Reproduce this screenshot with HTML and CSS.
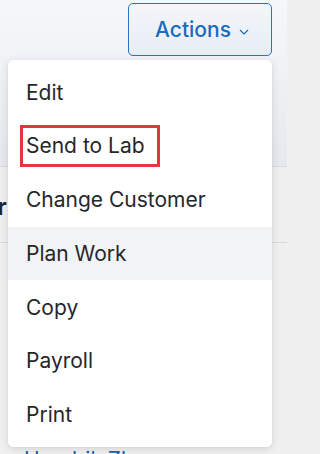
FILE: index.html
```html
<!DOCTYPE html>
<html>
<head>
<meta charset="utf-8">
<link rel="stylesheet" href="styles.css">
</head>
<body>
<div class="page">
  <div class="header">
    <button class="actions">Actions
      <svg class="chev" width="10" height="6" viewBox="0 0 10 6"><path d="M1 1 L5 5 L9 1" fill="none" stroke="#1b6bbf" stroke-width="1.2"/></svg>
    </button>
  </div>
  <div class="row"><span class="title">r</span></div>
  <div class="rest"><span class="link">Hendrik Zhang</span></div>
</div>
<ul class="menu">
  <li class="item">Edit</li>
  <li class="item"><span class="marked">Send to Lab</span></li>
  <li class="item">Change Customer</li>
  <li class="item hover">Plan Work</li>
  <li class="item">Copy</li>
  <li class="item">Payroll</li>
  <li class="item">Print</li>
</ul>
</body>
</html>
```
FILE: styles.css
```css
html, body {
  margin: 0;
  padding: 0;
  width: 287px;
  height: 454px;
  overflow: hidden;
}
body {
  position: relative;
  background: #f0f0f1;
  font-family: Inter, "Noto Sans", sans-serif;
}
.page {
  width: 287px;
  height: 454px;
  overflow: hidden;
  display: flex;
  flex-direction: column;
}
.header {
  flex: none;
  height: 167px;
  border-bottom: 1px solid #d9dbe0;
  background: linear-gradient(180deg, #f6f7f9 0%, #f1f2f5 40%, #e6e8ed 100%);
  display: flex;
  justify-content: flex-end;
  align-items: flex-start;
  padding: 3px 15px 0 0;
  box-sizing: border-box;
}
.actions {
  width: 144px;
  height: 53px;
  border: 1px solid #2a73c2;
  border-radius: 5px;
  background: linear-gradient(180deg, #f3f6fa, #e8eef6);
  color: #1b6bbf;
  font-family: Inter, "Noto Sans", sans-serif;
  font-size: 21px;
  font-weight: 500;
  display: flex;
  align-items: center;
  justify-content: center;
  gap: 8px;
  padding: 0 0 0 4px;
}
.chev {
  margin-top: 4px;
}
.row {
  flex: none;
  height: 76px;
  border-bottom: 1px solid #d9dadc;
  background: #efeff0;
  display: flex;
  align-items: center;
  padding-top: 4px;
  box-sizing: border-box;
}
.title {
  font-size: 24px;
  font-weight: 700;
  color: #15263d;
  margin-left: -3px;
}
.rest {
  flex: none;
  height: 300px;
  background: #f0f0f1;
  padding: 204px 0 0 24px;
  box-sizing: border-box;
}
.link {
  color: #1a5fae;
  font-size: 21px;
}
.menu {
  position: absolute;
  left: 8px;
  top: 60px;
  width: 264px;
  margin: 0;
  padding: 6px 0;
  list-style: none;
  background: #fff;
  border-radius: 5px;
  box-shadow: 0 2px 8px rgba(0,0,0,0.12), 0 0 2px rgba(0,0,0,0.06);
  box-sizing: border-box;
}
.item {
  height: 53.6px;
  display: flex;
  align-items: center;
  padding-left: 18px;
  font-size: 21px;
  color: #25272b;
}
.item.hover {
  background: #f2f3f5;
}
.marked {
  display: inline-block;
  height: 36px;
  line-height: 36px;
  outline: 3px solid #e8353b;
  outline-offset: 0;
  padding: 0 12px 0 3px;
  margin-left: -3px;
}
```
